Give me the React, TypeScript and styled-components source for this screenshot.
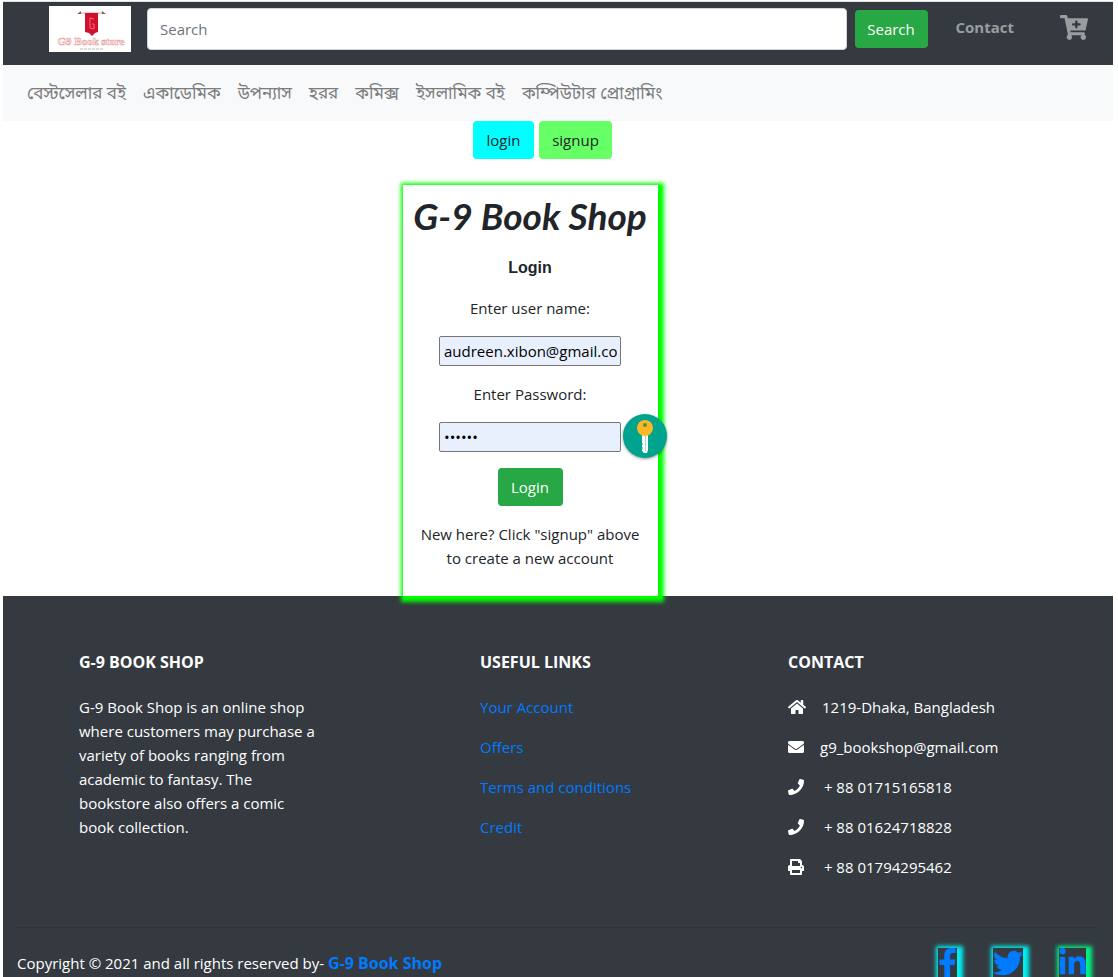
import React from "react";
import styled, { createGlobalStyle } from "styled-components";
import {
  FaCartPlus,
  FaEnvelope,
  FaFacebookF,
  FaHome,
  FaLinkedinIn,
  FaPhone,
  FaPrint,
  FaTwitter,
} from "react-icons/fa";

const GlobalStyle = createGlobalStyle`
  *, *::before, *::after { box-sizing: border-box; }
  body {
    margin: 0;
    background: #fff;
    color: #212529;
    font-family: "Open Sans", "Noto Sans", "Noto Sans Bengali", sans-serif;
    font-size: 15px;
    line-height: 24px;
  }
  h1, h2, h3, p, ul { margin: 0; padding: 0; }
  ul { list-style: none; }
  a { color: #007bff; text-decoration: none; }
  input, button { font: inherit; }
`;

const Page = styled.div`
  margin: 0 5px 0 3px;
  padding-top: 2px;
  box-shadow: inset 0 1px 0 #fff, inset 0 2px 0 #dde2e6;
`;

const TopBar = styled.header`
  display: flex;
  align-items: flex-start;
  height: 63px;
  padding: 4px 25px 0 46px;
  background: #343a40;
`;

const LogoLink = styled.a`
  display: block;
  width: 82px;
  height: 46px;
  margin-right: 16px;
  background: #fff;
  flex: none;
`;

const SearchForm = styled.form`
  display: flex;
  align-items: center;
  flex: 1;
  gap: 8px;
  padding-top: 2px;
`;

const SearchInput = styled.input`
  flex: 1;
  min-width: 0;
  height: 42px;
  padding: 0 12px;
  border: 1px solid #ced4da;
  border-radius: 4px;
  background: #fff;
  color: #495057;
  &::placeholder { color: #6c757d; opacity: 1; }
`;

const Button = styled.button<{ $bg: string; $fg: string; $width: number }>`
  width: ${(p) => p.$width}px;
  height: 38px;
  padding: 0;
  border: 0;
  border-radius: 4px;
  background: ${(p) => p.$bg};
  color: ${(p) => p.$fg};
`;

const ContactLink = styled.a`
  margin: 9px 46px 0 28px;
  color: #9a9da0;
  font-weight: 700;
`;

const CartLink = styled.a`
  display: flex;
  margin-top: 9px;
  color: #9a9da0;
  font-size: 28px;
  svg { height: 25px; }
`;

const CategoryBar = styled.nav`
  display: flex;
  gap: 17px;
  height: 56px;
  padding: 16px 24px;
  background: #f8f9fa;
  a { color: #7b7c7d; font-size: 17px; }
`;

const Main = styled.main`
  display: flex;
  flex-direction: column;
  align-items: center;
  gap: 26px;
`;

const Switcher = styled.div`
  display: flex;
  gap: 5px;
  margin-right: 31px;
`;

const Card = styled.form`
  position: relative;
  z-index: 1;
  display: flex;
  flex-direction: column;
  align-items: center;
  gap: 16px;
  width: 255px;
  margin-right: 55px;
  padding: 7px 1px 26px 0;
  background: #fff;
  box-shadow: 2px 2px 4px 4px #00ff00;
  text-align: center;
`;

const Brand = styled.h1`
  font: italic 700 37px/48px "Ink Free", "Segoe Print", Lato, cursive;
  white-space: nowrap;
`;

const CardTitle = styled.h2`
  font: 700 16px/24px "Liberation Sans", sans-serif;
`;

const Field = styled.div`
  position: relative;
  display: flex;
  flex-direction: column;
  align-items: center;
  gap: 16px;
`;

const TextInput = styled.input`
  width: 182px;
  height: 30px;
  padding: 0 3px 0 4px;
  border: 1px solid #767676;
  border-radius: 2px;
  background: #e8f0fe;
  color: #000;
`;

const KeyBadge = styled.button`
  position: absolute;
  right: -46px;
  bottom: -6px;
  width: 44px;
  height: 44px;
  padding: 0;
  border: 0;
  border-radius: 50%;
  background: #00a38d;
  box-shadow: 0 1px 3px rgba(0, 0, 0, 0.4);
  svg { display: block; }
`;

const Footer = styled.footer`
  padding: 54px 15px 0 14px;
  background: #343a40;
  color: #fff;
`;

const FooterColumns = styled.div`
  display: grid;
  grid-template-columns: 401fr 308fr 248fr;
  padding: 0 62px 48px;
`;

const FooterTitle = styled.h3`
  margin-bottom: 21px;
  font-size: 16px;
  line-height: 24px;
  text-transform: uppercase;
`;

const About = styled.p`
  max-width: 240px;
`;

const FooterList = styled.ul`
  display: grid;
  gap: 16px;
`;

const ContactItem = styled.li`
  display: flex;
  align-items: center;
  gap: 16px;
  white-space: pre;
  svg { flex: none; }
`;

const BottomRow = styled.div`
  display: flex;
  justify-content: space-between;
  align-items: flex-start;
  padding-top: 20px;
  border-top: 1px solid #2f3439;
`;

const Copyright = styled.p`
  padding-top: 3px;
  strong { font-size: 16px; }
`;

const Socials = styled.div`
  display: flex;
  gap: 36px;
  padding-right: 12px;
`;

const SocialLink = styled.a<{ $glow: string; $width: number }>`
  display: block;
  width: ${(p) => p.$width}px;
  height: 38px;
  background: #343a40;
  box-shadow: 2px 2px 4px 4px ${(p) => p.$glow};
  svg { display: block; width: 100%; height: 30px; }
`;

const categories = [
  "বেস্টসেলার বই",
  "একাডেমিক",
  "উপন্যাস",
  "হরর",
  "কমিক্স",
  "ইসলামিক বই",
  "কম্পিউটার প্রোগ্রামিং",
];

const links = ["Your Account", "Offers", "Terms and conditions", "Credit"];

const contacts = [
  { icon: <FaHome size={18} />, text: "1219-Dhaka, Bangladesh" },
  { icon: <FaEnvelope size={16} />, text: "g9_bookshop@gmail.com" },
  { icon: <FaPhone size={16} />, text: " + 88 01715165818" },
  { icon: <FaPhone size={16} />, text: " + 88 01624718828" },
  { icon: <FaPrint size={16} />, text: " + 88 01794295462" },
];

const Logo = () => (
  <svg width="82" height="46" viewBox="0 0 82 46" role="img" aria-label="G9 Book store">
    <path d="M30 7h25" stroke="#d9a0a4" strokeWidth="1" />
    <path d="M28 8l4-3v3zM57 8l-4-3v3z" fill="#8d5a60" />
    <path d="M36 7h13v19l-3 1-3 3-3-3-4-1z" fill="#d40f2c" />
    <path d="M45 13l-4-1v10l4 1v-5h-2" fill="none" stroke="#e8707e" />
    <text
      x="42"
      y="39"
      textAnchor="middle"
      fontFamily="Liberation Serif, serif"
      fontWeight="700"
      fontSize="11"
      fill="#fff"
      stroke="#e9a6a6"
      strokeWidth="0.7"
    >
      G9 Book store
    </text>
    <path d="M31 43h23" stroke="#bbb" strokeWidth="1" strokeDasharray="3 1" />
  </svg>
);

const KeyIcon = () => (
  <svg width="44" height="44" viewBox="0 0 44 44" aria-hidden="true">
    <path d="M19 20h6v16l-1 3h-3l-2-2v-2l1-1-1-1v-2l1-1-1-1z" fill="#fff" />
    <path d="M22.5 22v15" stroke="#9fd8d0" strokeWidth="1" />
    <circle cx="22" cy="14" r="8" fill="#fbb724" />
    <circle cx="22" cy="11" r="2" fill="#5a8a4a" />
  </svg>
);

export default function App() {
  return (
    <>
      <GlobalStyle />
      <Page>
        <TopBar>
          <LogoLink href="#home"><Logo /></LogoLink>
          <SearchForm onSubmit={(e) => e.preventDefault()}>
            <SearchInput type="search" placeholder="Search" aria-label="Search" />
            <Button type="submit" $bg="#28a745" $fg="#fff" $width={73}>Search</Button>
          </SearchForm>
          <ContactLink href="#contact">Contact</ContactLink>
          <CartLink href="#cart" aria-label="Cart"><FaCartPlus /></CartLink>
        </TopBar>
        <CategoryBar>
          {categories.map((c) => <a href="#category" key={c}>{c}</a>)}
        </CategoryBar>
        <Main>
          <Switcher>
            <Button type="button" $bg="#00ffff" $fg="#212529" $width={61}>login</Button>
            <Button type="button" $bg="#66ff66" $fg="#212529" $width={73}>signup</Button>
          </Switcher>
          <Card onSubmit={(e) => e.preventDefault()}>
            <Brand>G-9 Book Shop</Brand>
            <CardTitle>Login</CardTitle>
            <Field>
              <label htmlFor="user">Enter user name:</label>
              <TextInput id="user" type="text" defaultValue="audreen.xibon@gmail.com" />
            </Field>
            <Field>
              <label htmlFor="password">Enter Password:</label>
              <TextInput id="password" type="password" defaultValue="secret" />
              <KeyBadge type="button" aria-label="Password manager"><KeyIcon /></KeyBadge>
            </Field>
            <Button type="submit" $bg="#28a745" $fg="#fff" $width={65}>Login</Button>
            <p>New here? Click "signup" above<br />to create a new account</p>
          </Card>
        </Main>
        <Footer>
          <FooterColumns>
            <section>
              <FooterTitle>G-9 Book Shop</FooterTitle>
              <About>
                G-9 Book Shop is an online shop where customers may purchase a variety of books
                ranging from academic to fantasy. The bookstore also offers a comic book collection.
              </About>
            </section>
            <section>
              <FooterTitle>Useful links</FooterTitle>
              <FooterList>
                {links.map((l) => <li key={l}><a href="#link">{l}</a></li>)}
              </FooterList>
            </section>
            <section>
              <FooterTitle>Contact</FooterTitle>
              <FooterList>
                {contacts.map((c) => (
                  <ContactItem key={c.text}>{c.icon}<span>{c.text}</span></ContactItem>
                ))}
              </FooterList>
            </section>
          </FooterColumns>
          <BottomRow>
            <Copyright>
              Copyright © 2021 and all rights reserved by-{" "}
              <a href="#home"><strong>G-9 Book Shop</strong></a>
            </Copyright>
            <Socials>
              <SocialLink href="#facebook" aria-label="Facebook" $glow="#00f0f0" $width={19}>
                <FaFacebookF />
              </SocialLink>
              <SocialLink href="#twitter" aria-label="Twitter" $glow="#00f0f0" $width={30}>
                <FaTwitter />
              </SocialLink>
              <SocialLink href="#linkedin" aria-label="LinkedIn" $glow="#00f080" $width={27}>
                <FaLinkedinIn />
              </SocialLink>
            </Socials>
          </BottomRow>
        </Footer>
      </Page>
    </>
  );
}
